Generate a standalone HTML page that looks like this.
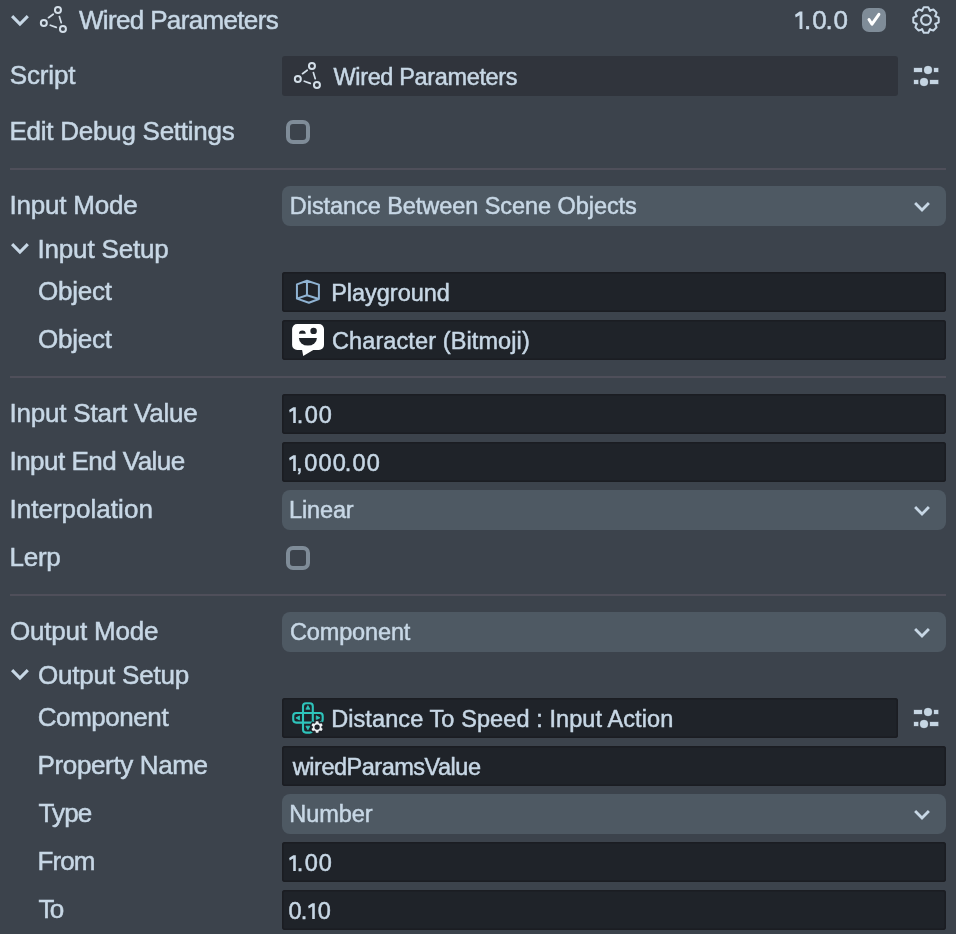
<!DOCTYPE html>
<html><head><meta charset="utf-8">
<style>
html,body{margin:0;padding:0;}
body{width:956px;height:934px;background:#3c434c;position:relative;overflow:hidden;font-family:"Liberation Sans",sans-serif;color:#c7d7e5;}
.t{position:absolute;white-space:nowrap;transform:translateZ(0);-webkit-text-stroke:0.5px #c7d7e5;}
.f{position:absolute;left:282px;width:664px;height:40px;background:#1f2329;border-radius:3px;box-shadow:inset 0 0 0 1.5px #1b1d22;}
.fs{box-shadow:none;}
.fs{background:#30343c;width:616px;box-shadow:none;}
.fn{width:616px;}
.dd{position:absolute;left:282px;width:664px;height:40px;background:#4e5963;border-radius:8px;}
.sep{position:absolute;left:10px;width:936px;height:2px;background:#4f4f5a;}
.cb{position:absolute;left:286px;width:16px;height:16px;border:4px solid #7f8c98;border-radius:7px;}
svg{position:absolute;overflow:visible;}
.h1{color:transparent;-webkit-text-stroke-color:transparent;}
</style></head><body>
<svg width="0" height="0" style="position:absolute">
 <defs>
  <g id="wp">
   <g fill="none" stroke="#d3dee8" stroke-width="2">
    <circle cx="43.83" cy="22.93" r="3"/><circle cx="57.95" cy="9.94" r="3"/><circle cx="62.94" cy="28.94" r="3"/>
   </g>
   <g stroke="#d3dee8" stroke-width="1.7" stroke-linecap="round">
    <line x1="48.5" y1="17.7" x2="53.2" y2="14.2"/><line x1="59.35" y1="16.6" x2="61.25" y2="22.7"/><line x1="50.3" y1="25.2" x2="56.3" y2="27.4"/>
   </g>
  </g>
  <filter id="bl" x="-20%" y="-20%" width="140%" height="140%"><feGaussianBlur stdDeviation="0.45"/></filter>
  <g id="sl" fill="#c5d5e2" stroke="rgba(197,213,226,0.35)" stroke-width="0.8">
   <rect x="914" y="68" width="8" height="4"/><circle cx="928" cy="70" r="4"/><rect x="934" y="68" width="4.2" height="4"/>
   <rect x="914" y="80" width="4.2" height="4"/><circle cx="924" cy="82" r="4"/><rect x="930" y="80" width="8.2" height="4"/>
  </g>
  <polyline id="dch" points="915.1,203.1 922,210 928.9,203.1" fill="none" stroke="#c7d7e5" stroke-width="2.8"/>
 </defs>
</svg>
<!-- header -->
<svg style="left:0;top:0" width="956" height="50">
  <polyline points="12.1,16.2 19.94,24.0 27.8,16.2" fill="none" stroke="#c7d7e5" stroke-width="3.1"/>
  <use href="#wp"/>
  <rect x="862" y="8" width="24" height="24" rx="7" fill="#7f8c98"/>
  <polyline points="869,19.5 872,24.2 878.9,14.3" fill="none" stroke="#fff" stroke-width="3" stroke-linecap="round" stroke-linejoin="round"/>
  <g transform="translate(926,20)" fill="none" stroke="#c7d7e5" stroke-width="2" stroke-linejoin="round">
    <circle r="4.9" stroke-width="2.2"/>
    <path id="gearp" d="M-3.52,-10.21 L-2.24,-12.70 L2.24,-12.70 L3.52,-10.21 Q3.44,-8.31 4.73,-9.71 L7.40,-10.57 L10.57,-7.40 L9.71,-4.73 Q8.31,-3.44 10.21,-3.52 L12.70,-2.24 L12.70,2.24 L10.21,3.52 Q8.31,3.44 9.71,4.73 L10.57,7.40 L7.40,10.57 L4.73,9.71 Q3.44,8.31 3.52,10.21 L2.24,12.70 L-2.24,12.70 L-3.52,10.21 Q-3.44,8.31 -4.73,9.71 L-7.40,10.57 L-10.57,7.40 L-9.71,4.73 Q-8.31,3.44 -10.21,3.52 L-12.70,2.24 L-12.70,-2.24 L-10.21,-3.52 Q-8.31,-3.44 -9.71,-4.73 L-10.57,-7.40 L-7.40,-10.57 L-4.73,-9.71 Q-3.44,-8.31 -3.52,-10.21 Z"/>
  </g>
</svg>
<div class="f fs" style="top:56px"></div>
<svg style="left:0;top:0" width="956" height="934">
  <use href="#wp" transform="translate(254,56)"/>
</svg>
<svg style="left:0;top:0" width="956" height="934"><use href="#sl"/><use href="#sl" transform="translate(0,642)"/></svg>
<div class="cb" style="top:120px"></div>
<div class="sep" style="top:168px"></div>
<div class="dd" style="top:186px"></div>
<div class="f" style="top:272px"></div>
<div class="f" style="top:320px"></div>
<div class="sep" style="top:376px"></div>
<div class="f" style="top:394px"></div>
<div class="f" style="top:442px"></div>
<div class="dd" style="top:490px"></div>
<div class="cb" style="top:546px"></div>
<div class="sep" style="top:594px"></div>
<div class="dd" style="top:612px"></div>
<div class="f fn" style="top:698px"></div>
<div class="f" style="top:746px"></div>
<div class="dd" style="top:794px"></div>
<div class="f" style="top:842px"></div>
<div class="f" style="top:890px"></div>
<svg style="left:0;top:0" width="956" height="934">
  <use href="#dch"/>
  <use href="#dch" transform="translate(0,304)"/>
  <use href="#dch" transform="translate(0,426)"/>
  <use href="#dch" transform="translate(0,608)"/>
  <polyline points="12.1,16.2 19.94,24.0 27.8,16.2" fill="none" stroke="#c7d7e5" stroke-width="3.1" transform="translate(0,228)"/>
  <polyline points="12.1,16.2 19.94,24.0 27.8,16.2" fill="none" stroke="#c7d7e5" stroke-width="3.1" transform="translate(0,654)"/>
<!-- component icon -->
  <g>
    <path d="M306,703.2 H309.8 Q312.8,703.2 312.8,706.2 V713 H319.7 Q322.7,713 322.7,716 V719.6 Q322.7,722.6 319.7,722.6 H312.8 V729.6 Q312.8,732.6 309.8,732.6 H306 Q303,732.6 303,729.6 V722.6 H296.2 Q293.2,722.6 293.2,719.6 V716 Q293.2,713 296.2,713 H303 V706.2 Q303,703.2 306,703.2 Z M303,713 H312.8 V722.6 H303 Z" fill="none" stroke="#2ec4bb" stroke-width="2.1" stroke-linejoin="miter"/>
    <path d="M307.90,705.60 L309.90,709.20 L305.90,709.20 Z M295.90,717.90 L299.50,715.90 L299.50,719.90 Z M319.90,717.80 L316.30,715.80 L316.30,719.80 Z M307.90,729.80 L309.90,726.20 L305.90,726.20 Z" fill="#2ec4bb" stroke="#2ec4bb" stroke-width="0.8" stroke-linejoin="round"/>
    <path d="M315.49,723.11 L315.87,721.33 L318.33,721.33 L318.71,723.11 L319.75,723.71 L321.48,723.15 L322.71,725.28 L321.36,726.50 L321.36,727.70 L322.71,728.92 L321.48,731.05 L319.75,730.49 L318.71,731.09 L318.33,732.87 L315.87,732.87 L315.49,731.09 L314.45,730.49 L312.72,731.05 L311.49,728.92 L312.84,727.70 L312.84,726.50 L311.49,725.28 L312.72,723.15 L314.45,723.71 Z" fill="#1f2329" stroke="#1f2329" stroke-width="3" stroke-linejoin="round"/>
    <path d="M315.49,723.11 L315.87,721.33 L318.33,721.33 L318.71,723.11 L319.75,723.71 L321.48,723.15 L322.71,725.28 L321.36,726.50 L321.36,727.70 L322.71,728.92 L321.48,731.05 L319.75,730.49 L318.71,731.09 L318.33,732.87 L315.87,732.87 L315.49,731.09 L314.45,730.49 L312.72,731.05 L311.49,728.92 L312.84,727.70 L312.84,726.50 L311.49,725.28 L312.72,723.15 L314.45,723.71 Z M319.7,727.1 A2.6,2.6 0 1 0 314.5,727.1 A2.6,2.6 0 1 0 319.7,727.1 Z" fill="#eef1f4" fill-rule="evenodd" stroke="none" stroke-linejoin="round"/>
  </g>
  <!-- cube -->
  <g fill="none" stroke="#8fb3d3" stroke-width="2" stroke-linejoin="round">
    <path d="M306.96,280.75 L296.94,284.4 L296.94,298.67 L308.9,302.7 L318.9,299.06 L318.9,284.6 Z M306.96,280.75 L306.96,295.2 L296.94,298.67 M306.96,295.2 L318.9,299.06"/>
  </g>
  <!-- bitmoji -->
  <g>
    <path d="M297.2,323.9 H318.9 A5.1,5.1 0 0 1 324,329 V345 A5.1,5.1 0 0 1 318.9,350.1 H313.3 L303.2,355.9 L302.1,350.1 H297.2 A5.1,5.1 0 0 1 292.1,345 V329 A5.1,5.1 0 0 1 297.2,323.9 Z" fill="#fff"/>
    <path d="M298.95,333.8 A3.4,3.4 0 0 1 305.75,333.8 Z" fill="#1f2329"/>
    <circle cx="313.6" cy="330.9" r="3.2" fill="#1f2329"/>
    <path d="M298.9,338.1 H316.9 A9,7.5 0 0 1 298.9,338.1 Z" fill="#1f2329"/>
  </g>
</svg>

<div class="t" id="t0" style="left:78.96px;top:7px;font-size:26px;line-height:26px;letter-spacing:-0.654px">Wired Parameters</div>
<div class="t" id="t2" style="left:9.73px;top:62px;font-size:26px;line-height:26px;letter-spacing:-0.130px">Script</div>
<div class="t" id="t3" style="left:333.49px;top:66px;font-size:23.5px;line-height:23.5px;letter-spacing:-0.352px">Wired Parameters</div>
<div class="t" id="t4" style="left:9.53px;top:118px;font-size:26px;line-height:26px;letter-spacing:-0.258px">Edit Debug Settings</div>
<div class="t" id="t5" style="left:9.47px;top:192px;font-size:26px;line-height:26px;letter-spacing:-0.206px">Input Mode</div>
<div class="t" id="t6" style="left:289.82px;top:195px;font-size:23.5px;line-height:23.5px;letter-spacing:-0.060px">Distance Between Scene Objects</div>
<div class="t" id="t7" style="left:37.47px;top:236px;font-size:26px;line-height:26px;letter-spacing:-0.168px">Input Setup</div>
<div class="t" id="t8" style="left:37.94px;top:278px;font-size:26px;line-height:26px;letter-spacing:-0.213px">Object</div>
<div class="t" id="t9" style="left:331.16px;top:282px;font-size:23.5px;line-height:23.5px;letter-spacing:-0.016px">Playground</div>
<div class="t" id="t10" style="left:37.94px;top:326px;font-size:26px;line-height:26px;letter-spacing:-0.213px">Object</div>
<div class="t" id="t11" style="left:331.99px;top:330px;font-size:23.5px;line-height:23.5px;letter-spacing:0.104px">Character (Bitmoji)</div>
<div class="t" id="t12" style="left:9.47px;top:400px;font-size:26px;line-height:26px;letter-spacing:-0.212px">Input Start Value</div>
<div class="t" id="t14" style="left:9.47px;top:448px;font-size:26px;line-height:26px;letter-spacing:-0.524px">Input End Value</div>
<div class="t" id="t16" style="left:9.47px;top:496px;font-size:26px;line-height:26px;letter-spacing:0.023px">Interpolation</div>
<div class="t" id="t17" style="left:288.98px;top:499px;font-size:23.5px;line-height:23.5px;letter-spacing:-0.119px">Linear</div>
<div class="t" id="t18" style="left:9.53px;top:544px;font-size:26px;line-height:26px;letter-spacing:-0.276px">Lerp</div>
<div class="t" id="t19" style="left:9.94px;top:618px;font-size:26px;line-height:26px;letter-spacing:-0.172px">Output Mode</div>
<div class="t" id="t20" style="left:290.01px;top:621px;font-size:23.5px;line-height:23.5px;letter-spacing:-0.145px">Component</div>
<div class="t" id="t21" style="left:37.94px;top:662px;font-size:26px;line-height:26px;letter-spacing:-0.174px">Output Setup</div>
<div class="t" id="t22" style="left:37.80px;top:704px;font-size:26px;line-height:26px;letter-spacing:-0.452px">Component</div>
<div class="t" id="t23" style="left:331.16px;top:708px;font-size:23.5px;line-height:23.5px;letter-spacing:0.091px">Distance To Speed : Input Action</div>
<div class="t" id="t24" style="left:37.53px;top:752px;font-size:26px;line-height:26px;letter-spacing:-0.362px">Property Name</div>
<div class="t" id="t25" style="left:292.87px;top:756px;font-size:23.5px;line-height:23.5px;letter-spacing:-0.489px">wiredParamsValue</div>
<div class="t" id="t26" style="left:38.47px;top:800px;font-size:26px;line-height:26px;letter-spacing:-0.867px">Type</div>
<div class="t" id="t27" style="left:289.37px;top:803px;font-size:23.5px;line-height:23.5px;letter-spacing:-0.049px">Number</div>
<div class="t" id="t28" style="left:37.53px;top:848px;font-size:26px;line-height:26px;letter-spacing:-0.963px">From</div>
<div class="t" id="t30" style="left:38.47px;top:896px;font-size:26px;line-height:26px;letter-spacing:-1.788px">To</div>
<div class="t g" style="left:296.85px;top:404px;font-size:23.5px;line-height:23.5px">.</div>
<div class="t g" style="left:304.63px;top:404px;font-size:23.5px;line-height:23.5px">0</div>
<div class="t g" style="left:318.73px;top:404px;font-size:23.5px;line-height:23.5px">0</div>
<div class="t g" style="left:296.04px;top:452px;font-size:23.5px;line-height:23.5px">,</div>
<div class="t g" style="left:304.33px;top:452px;font-size:23.5px;line-height:23.5px">0</div>
<div class="t g" style="left:318.43px;top:452px;font-size:23.5px;line-height:23.5px">0</div>
<div class="t g" style="left:332.63px;top:452px;font-size:23.5px;line-height:23.5px">0</div>
<div class="t g" style="left:344.75px;top:452px;font-size:23.5px;line-height:23.5px">.</div>
<div class="t g" style="left:352.43px;top:452px;font-size:23.5px;line-height:23.5px">0</div>
<div class="t g" style="left:366.63px;top:452px;font-size:23.5px;line-height:23.5px">0</div>
<div class="t g" style="left:296.85px;top:852px;font-size:23.5px;line-height:23.5px">.</div>
<div class="t g" style="left:304.63px;top:852px;font-size:23.5px;line-height:23.5px">0</div>
<div class="t g" style="left:318.73px;top:852px;font-size:23.5px;line-height:23.5px">0</div>
<div class="t g" style="left:288.43px;top:900px;font-size:23.5px;line-height:23.5px">0</div>
<div class="t g" style="left:300.75px;top:900px;font-size:23.5px;line-height:23.5px">.</div>
<div class="t g" style="left:317.73px;top:900px;font-size:23.5px;line-height:23.5px">0</div>
<div class="t g" style="left:803.88px;top:7px;font-size:26px;line-height:26px">.</div>
<div class="t g" style="left:812.15px;top:7px;font-size:26px;line-height:26px">0</div>
<div class="t g" style="left:825.58px;top:7px;font-size:26px;line-height:26px">.</div>
<div class="t g" style="left:833.55px;top:7px;font-size:26px;line-height:26px">0</div>
<svg style="left:0;top:0" width="956" height="934">
 <defs><path id="one" d="M7.0,0 V-15.8 H4.5 L0.3,-13.0 L0.9,-10.5 L4.4,-12.6 V0 Z"/></defs>
 <g fill="#c7d7e5">
  <use href="#one" transform="translate(288.8,423)"/>
  <use href="#one" transform="translate(288.8,471)"/>
  <use href="#one" transform="translate(288.8,871)"/>
  <use href="#one" transform="translate(307.8,919)"/>
  <use href="#one" transform="translate(794.7,29) scale(1.1)"/>
 </g>
</svg>

</body></html>
